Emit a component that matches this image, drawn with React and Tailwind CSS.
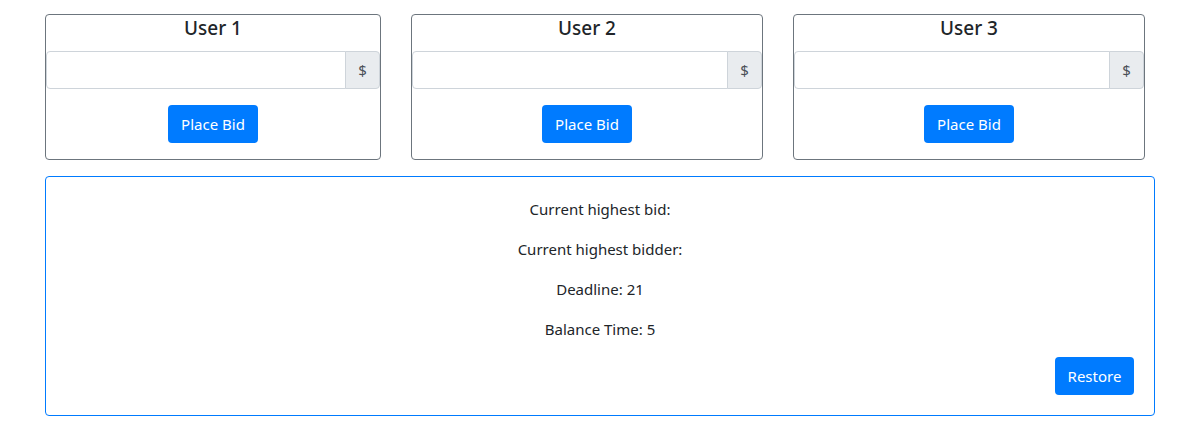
import React from "react";

const font = { fontFamily: '"Segoe UI", "Noto Sans", "Open Sans", sans-serif' };

function UserCard({ name, width }) {
  return (
    <div className={`${width} border border-[#6c757d] rounded-[4px] bg-white flex flex-col`}>
      <div className="pt-px mb-[12px] h-[24px] leading-[24px] text-center text-[19px] font-medium text-[#212529]">
        {name}
      </div>
      <div className="flex h-[38px]">
        <input
          type="text"
          className="flex-1 min-w-0 h-[38px] border border-[#ced4da] rounded-l-[4px] px-3 text-[16px] text-[#495057] outline-none"
        />
        <div className="w-[35px] h-[38px] -ml-px border border-[#ced4da] bg-[#e9ecef] rounded-r-[4px] flex items-center justify-center text-[15px] text-[#495057]">
          $
        </div>
      </div>
      <div className="flex justify-center mt-[16px] mb-[16px]">
        <button className="w-[90px] h-[38px] bg-[#007bff] text-white rounded-[4px] text-[15px] leading-[24px]">
          Place Bid
        </button>
      </div>
    </div>
  );
}

export default function App() {
  return (
    <div className="bg-white w-[1200px] h-[426px] text-[#212529]" style={font}>
      <div className="pt-[14px] pl-[45px] flex flex-col gap-[16px]">
        <div className="flex gap-[30px]">
          <UserCard name="User 1" width="w-[336px]" />
          <UserCard name="User 2" width="w-[352px]" />
          <UserCard name="User 3" width="w-[352px]" />
        </div>
        <div className="w-[1110px] h-[240px] border border-[#007bff] rounded-[4px] p-[20px] flex flex-col">
          <div className="flex flex-col gap-[16px] text-center text-[15px] leading-[24px]">
            <p>Current highest bid:</p>
            <p>Current highest bidder:</p>
            <p>Deadline: 21</p>
            <p>Balance Time: 5</p>
          </div>
          <div className="flex justify-end mt-[16px]">
            <button className="w-[79px] h-[38px] bg-[#007bff] text-white rounded-[4px] text-[15px] leading-[24px]">
              Restore
            </button>
          </div>
        </div>
      </div>
    </div>
  );
}
